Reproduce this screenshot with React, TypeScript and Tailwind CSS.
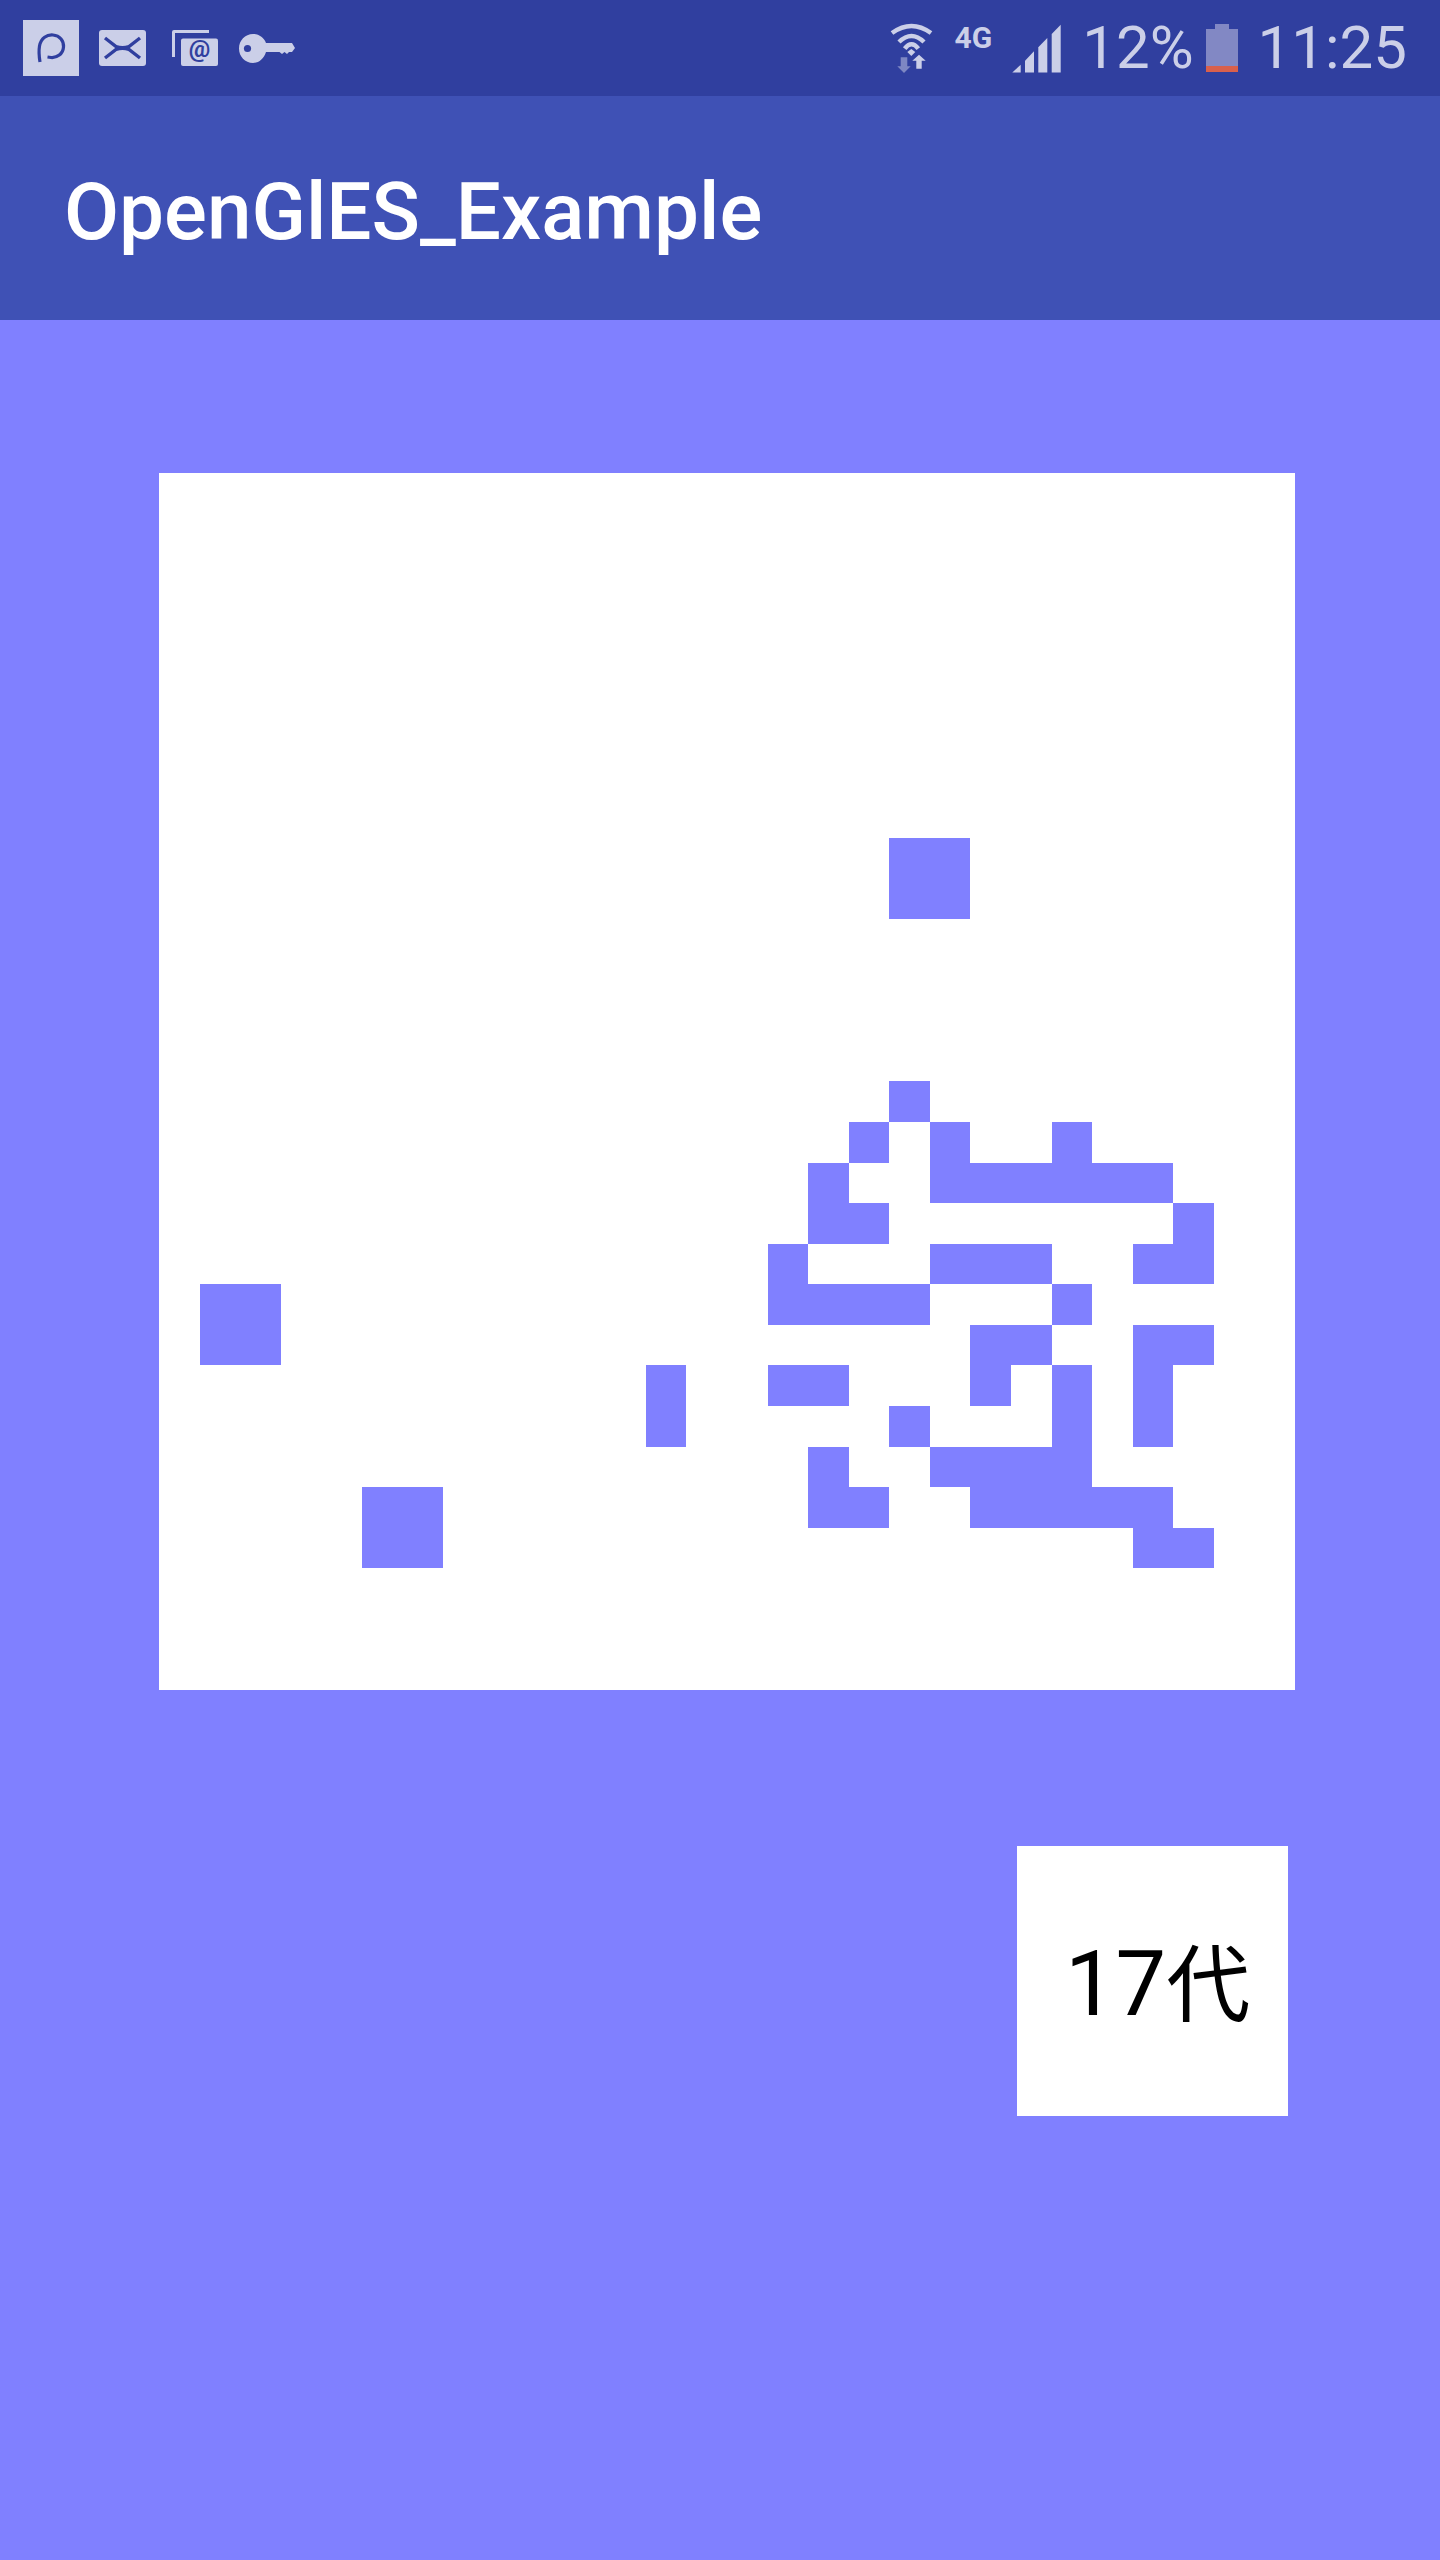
import React from 'react';

// live cells per row of the board, as [row, first col, last col]
const SPANS: [number, number, number][] = [
    [9, 18, 19], [10, 18, 19],
    [15, 18, 18],
    [16, 17, 17], [16, 19, 19], [16, 22, 22],
    [17, 16, 16], [17, 19, 24],
    [18, 16, 17], [18, 25, 25],
    [19, 15, 15], [19, 19, 21], [19, 24, 25],
    [20, 1, 2], [20, 15, 18], [20, 22, 22],
    [21, 1, 2], [21, 20, 21], [21, 24, 25],
    [22, 12, 12], [22, 15, 16], [22, 20, 20], [22, 22, 22], [22, 24, 24],
    [23, 12, 12], [23, 18, 18], [23, 22, 22], [23, 24, 24],
    [24, 16, 16], [24, 19, 22],
    [25, 5, 6], [25, 16, 17], [25, 20, 24],
    [26, 5, 6], [26, 24, 25],
];

const ICON = '#cbcfe8';
const BAR = '#303f9f';

const PushIcon = () => (
    <div className="w-[56px] h-[56px] bg-[#cbcfe8] flex items-center justify-center">
        <svg width="56" height="56" viewBox="0 0 56 56" fill="none">
            <path d="M17 42 C16 36 16 29 16.5 26 C18 18 24 14.5 30 15 C37 15.5 41 21 40.5 27 C40 34 34 38 28 37.5 L24.5 37" stroke={BAR} strokeWidth="3.2" />
        </svg>
    </div>
);

const MailIcon = () => (
    <svg width="47" height="36" viewBox="0 0 47 36" className="ml-[20px]">
        <rect x="0" y="0" width="47" height="36" rx="3" fill={ICON} />
        <path d="M6 8 L17 16.5 Q23.5 19 30 16.5 L41 8 M6 28 L17 19.5 Q23.5 17 30 19.5 L41 28" stroke={BAR} strokeWidth="3.4" fill="none" />
    </svg>
);

const AtIcon = () => (
    <svg width="46" height="36" viewBox="0 0 46 36" className="ml-[26px]">
        <path d="M0 2 Q0 0 2 0 H37 V3 H3 V27 H0 Z" fill={ICON} />
        <rect x="9" y="8.5" width="37" height="27.5" rx="2" fill={ICON} />
        <text x="27.5" y="27" textAnchor="middle" fontFamily="Roboto" fontWeight="700" fontSize="24" fill={BAR}>@</text>
    </svg>
);

const KeyIcon = () => (
    <svg width="56" height="29" viewBox="0 0 56 29" className="ml-[21px]">
        <path d="M14 0 C20 0 25 3.5 27 9 H53 L56 14 L53 18 H50 L48 20 L45.5 18 L43 20 L40.5 18 H27 C25 24.5 20 29 14 29 C6 29 0 22.5 0 14.5 C0 6.5 6 0 14 0 Z" fill={ICON} />
        <circle cx="8.5" cy="14.5" r="3.6" fill={BAR} />
    </svg>
);

const WifiIcon = () => (
    <svg width="43" height="50" viewBox="0 0 43 50">
        <g fill="none" stroke={ICON} strokeWidth="4.5">
            <path d="M2 10 Q21.5 -4 41 10" />
            <path d="M9 19 Q21.5 7 34 19" />
            <path d="M14.7 25.7 Q21.5 17 28.3 25.7" />
        </g>
        <path d="M21.3 26 L25.3 29 L21.3 33 L17.3 29 Z" fill={ICON} />
        <path d="M10.7 34.3 H17.3 V43.3 H20.7 L14 50 L7.3 43.3 H10.7 Z" fill={ICON} fillOpacity="0.5" />
        <path d="M29 31.7 L35.7 37.7 H31.7 V45.7 H26.3 V37.7 H22.3 Z" fill={ICON} />
    </svg>
);

const SignalIcon = () => (
    <svg width="49" height="49" viewBox="0 0 49 49" className="ml-[20px]">
        <path d="M0.3 48.5 L8.7 40.7 V48.5 Z" fill={ICON} />
        <path d="M13 48.5 V36.7 L22 27.3 V48.5 Z" fill={ICON} />
        <path d="M26.3 48.5 V23.3 L35.3 14 V48.5 Z" fill={ICON} />
        <path d="M39.7 48.5 V10 L48.7 0.7 V48.5 Z" fill={ICON} />
    </svg>
);

const BatteryIcon = () => (
    <svg width="32" height="48" viewBox="0 0 32 48" className="ml-[12px]">
        <path d="M9 0 H23 V5 H32 V48 H0 V5 H9 Z" fill="#8288c4" />
        <rect x="0" y="42" width="32" height="6" fill="#d9604c" />
    </svg>
);

const StatusBar = () => (
    <div className="h-[96px] bg-[#303f9f] flex items-center pl-[23px] pr-[33px] text-[#cbcfe8] text-[60px] leading-none">
        <PushIcon />
        <MailIcon />
        <AtIcon />
        <KeyIcon />
        <div className="flex-1" />
        <WifiIcon />
        <span className="ml-[22px] mb-[21px] text-[30px] font-bold">4G</span>
        <SignalIcon />
        <span className="ml-[21px]">12%</span>
        <BatteryIcon />
        <span className="ml-[20px]">11:25</span>
    </div>
);

const Board = () => (
    <div className="relative grid grid-cols-[repeat(28,1fr)] grid-rows-[repeat(30,1fr)] w-[1136px] h-[1217px] ml-[159px] mt-[153px] bg-white">
        {SPANS.map(([row, from, to]) => (
            <div
                key={`${row}-${from}`}
                className="bg-[#8080ff]"
                style={{ gridRow: row + 1, gridColumn: `${from + 1} / ${to + 2}` }}
            />
        ))}
    </div>
);

export default function App() {
    return (
        <div className="w-[1440px] h-[2560px] bg-[#8080ff] flex flex-col font-['Roboto','Noto_Sans_CJK_SC',sans-serif]">
            <StatusBar />
            <div className="h-[224px] bg-[#3f51b5] flex items-center pl-[64px] pt-[8px]">
                <h1 className="text-[80px] font-medium text-white leading-none">OpenGlES_Example</h1>
            </div>
            <Board />
            <div className="flex justify-end pr-[152px] mt-[156px]">
                <div className="w-[271px] h-[270px] bg-white flex items-center pl-[48px] pt-[8px]">
                    <span className="text-[90px] text-black leading-none">17<span className="text-[84px]">代</span></span>
                </div>
            </div>
        </div>
    );
}
